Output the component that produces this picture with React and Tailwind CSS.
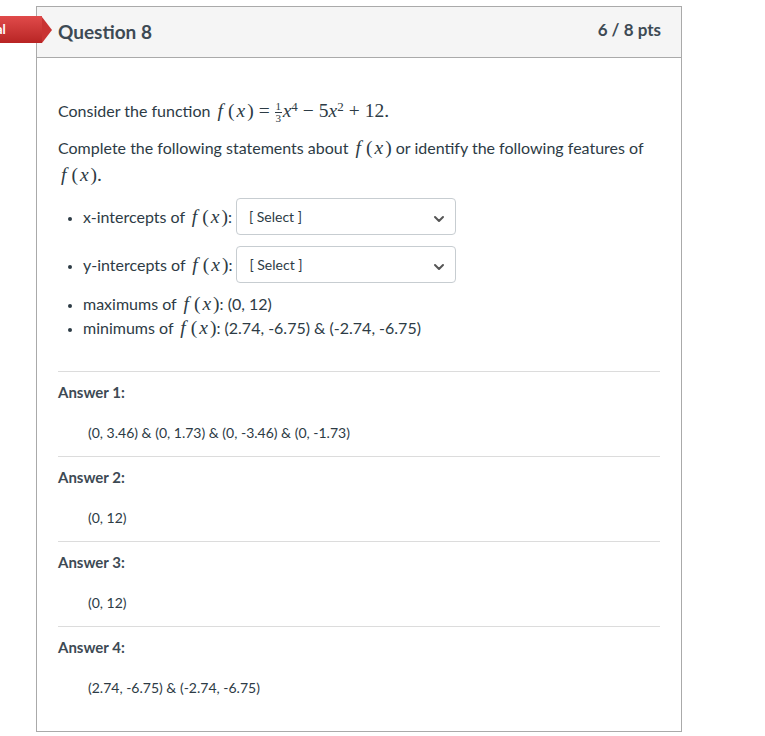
import { ChevronDown } from 'lucide-react'

const answers = [
  { label: 'Answer 1:', value: '(0, 3.46) & (0, 1.73) & (0, -3.46) & (0, -1.73)' },
  { label: 'Answer 2:', value: '(0, 12)' },
  { label: 'Answer 3:', value: '(0, 12)' },
  { label: 'Answer 4:', value: '(2.74, -6.75) & (-2.74, -6.75)' },
]

function M({ children }) {
  return <span className="font-['Liberation_Serif',serif] text-[19.5px] leading-none">{children}</span>
}

function Fx() {
  return (
    <M>
      <i className="ml-[3px] pr-[1px]">f</i>
      <span className="ml-[4px]">(</span>
      <i className="px-[2px]">x</i>)
    </M>
  )
}

function Op({ children }) {
  return <span className="mx-[5px]">{children}</span>
}

function Select() {
  return (
    <div className="ml-1 flex h-[37px] w-[220px] items-start justify-between rounded border border-[#c7cdd1] bg-white pl-3 pr-2 pt-[6px]">
      <span className="text-[14px] text-[#2d3b45]">[ Select ]</span>
      <ChevronDown className="mt-[6px] h-4 w-4 text-[#555]" strokeWidth={3} />
    </div>
  )
}

export default function App() {
  return (
    <div className="relative min-h-[736px] bg-white font-['Lato',sans-serif] text-[#2d3b45]">
      <div className="absolute left-0 top-[16px] flex h-[27px] items-center">
        <div className="flex h-full w-[42px] items-center overflow-hidden bg-gradient-to-b from-[#e04a4a] to-[#b82424] text-[13px] font-bold text-white">
          <span className="-ml-[4px]">al</span>
        </div>
        <div className="h-0 w-0 border-y-[13.5px] border-l-[10px] border-y-transparent border-l-[#c93333]" />
      </div>

      <div className="ml-[36px] w-[646px] pt-[6px]">
        <div className="border border-[#aaaaaa]">
          <div className="flex h-[51px] items-center justify-between border-b border-[#aaaaaa] bg-[#f5f5f5] pl-[21px] pr-[20px]">
            <h2 className="pt-[1px] text-[19px] font-bold text-[#3d4a54]">Question 8</h2>
            <span className="-mt-[5px] text-[17px] font-bold text-[#3d4a54]">6 / 8 pts</span>
          </div>

          <div className="px-[21px] pb-[20px] pt-[41px]">
            <p className="text-[16px] leading-[24px]">
              Consider the function <Fx />
              <M>
                <Op>=</Op>
              </M>
              <span className="inline-flex flex-col items-center align-[7px] font-['Liberation_Serif',serif] text-[11px] leading-[9px]">
                <span>1</span>
                <span className="my-[1px] h-px w-[7px] bg-[#2d3b45]" />
                <span>3</span>
              </span>
              <M>
                <i className="pl-[1px]">x</i>
                <sup className="text-[13px]">4</sup>
                <Op>−</Op>5<i>x</i>
                <sup className="text-[13px]">2</sup>
                <Op>+</Op>12.
              </M>
            </p>

            <p className="mt-[11px] text-[16px] leading-[27px]">
              Complete the following statements about <Fx /> or identify the following features of
              <br />
              <Fx />
              <M>.</M>
            </p>

            <ul className="mt-[10px] list-disc pl-[25px] text-[16px] leading-[24px] marker:text-[13px]">
              <li>
                <div className="flex items-center">
                  <span>
                    x-intercepts of <Fx />:
                  </span>
                  <Select />
                </div>
              </li>
              <li className="mt-[11px]">
                <div className="flex items-center">
                  <span>
                    y-intercepts of <Fx />:
                  </span>
                  <Select />
                </div>
              </li>
              <li className="mt-[9px]">
                maximums of <Fx />: (0, 12)
              </li>
              <li>
                minimums of <Fx />: (2.74, -6.75) &amp; (-2.74, -6.75)
              </li>
            </ul>

            <div className="mt-[31px]">
              {answers.map((a) => (
                <div key={a.label} className="h-[85px] border-t border-[#dcdcdc]">
                  <div className="pt-[10px] text-[15px] font-bold leading-[20px] text-[#3d4a54]">{a.label}</div>
                  <div className="pl-[30px] pt-[21px] text-[14px] leading-[20px]">{a.value}</div>
                </div>
              ))}
            </div>
          </div>
        </div>
      </div>
    </div>
  )
}
